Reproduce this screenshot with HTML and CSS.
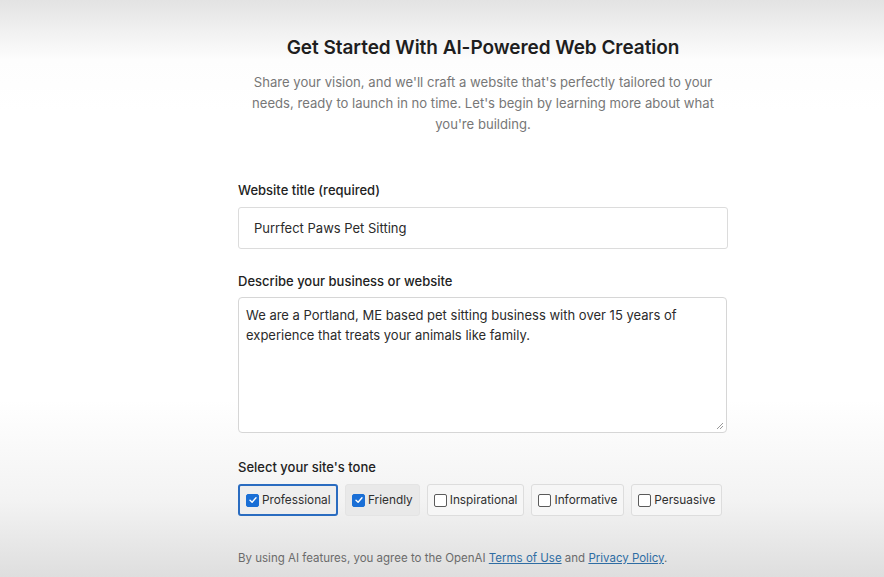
FILE: index.html
```html
<!DOCTYPE html>
<html>
<head>
<meta charset="utf-8">
<link rel="stylesheet" href="styles.css">
</head>
<body>
<main class="page">
  <section class="column">
    <header class="intro">
      <h1 class="title">Get Started With AI-Powered Web Creation</h1>
      <p class="subtitle">Share your vision, and we'll craft a website that's perfectly tailored to your needs, ready to launch in no time. Let's begin by learning more about what you're building.</p>
    </header>

    <div class="field field-title">
      <label class="label">Website title (required)</label>
      <div class="input">Purrfect Paws Pet Sitting</div>
    </div>

    <div class="field field-desc">
      <label class="label">Describe your business or website</label>
      <div class="textarea">We are a Portland, ME based pet sitting business with over 15 years of experience that treats your animals like family.
        <svg class="grip" width="8" height="8" viewBox="0 0 8 8"><path d="M7 1 L1 7 M7 4 L4 7" stroke="#999" stroke-width="1" fill="none"/></svg>
      </div>
    </div>

    <div class="field field-tone">
      <label class="label">Select your site's tone</label>
      <div class="tones">
        <div class="tone tone-focus"><span class="box checked"><svg width="10" height="10" viewBox="0 0 10 10"><path d="M2 5.2 L4.1 7.2 L8 2.8" stroke="#fff" stroke-width="1.4" fill="none" stroke-linecap="round" stroke-linejoin="round"/></svg></span>Professional</div>
        <div class="tone tone-active"><span class="box checked"><svg width="10" height="10" viewBox="0 0 10 10"><path d="M2 5.2 L4.1 7.2 L8 2.8" stroke="#fff" stroke-width="1.4" fill="none" stroke-linecap="round" stroke-linejoin="round"/></svg></span>Friendly</div>
        <div class="tone"><span class="box"></span>Inspirational</div>
        <div class="tone"><span class="box"></span>Informative</div>
        <div class="tone"><span class="box"></span>Persuasive</div>
      </div>
    </div>

    <p class="legal">By using AI features, you agree to the OpenAI <a href="#">Terms of Use</a> and <a href="#">Privacy Policy</a>.</p>
  </section>
</main>
</body>
</html>
```

FILE: styles.css
```css
* { box-sizing: border-box; }
html, body { margin: 0; padding: 0; height: 100%; }
body {
  font-family: Inter, "Noto Sans", sans-serif;
  color: #1e1e1e;
  background: linear-gradient(to bottom, #e3e3e3 0px, #fdfdfd 60px, #ffffff 110px, #ffffff 400px, #f3f3f3 500px, #dedede 577px);
  overflow: hidden;
}
.page {
  display: flex;
  padding-left: 238px;
}
.column {
  width: 490px;
  display: flex;
  flex-direction: column;
}
.intro {
  text-align: center;
  padding-top: 36px;
}
.title {
  margin: 0;
  font-size: 19px;
  font-weight: 600;
  line-height: 24px;
  letter-spacing: -0.05px;
  color: #1e1e1e;
}
.subtitle {
  margin: 12px auto 0;
  width: 480px;
  font-size: 13.1px;
  line-height: 21px;
  color: #777777;
}
.field { display: flex; flex-direction: column; }
.field-title { margin-top: 45px; }
.field-desc { margin-top: 22px; }
.field-tone { margin-top: 24px; }
.label {
  font-size: 13px;
  line-height: 20px;
  font-weight: 500;
  color: #222222;
  margin-bottom: 7px;
}
.input {
  height: 42px;
  border: 1px solid #dcdcdc;
  border-radius: 3px;
  background: #fff;
  padding: 0 15px;
  display: flex;
  align-items: center;
  font-size: 13px;
  color: #2b2b2b;
}
.textarea {
  position: relative;
  height: 136px;
  border: 1px solid #d6d6d6;
  border-radius: 4px;
  background: #fff;
  padding: 7px 30px 0 7px;
  font-size: 13px;
  line-height: 20px;
  color: #2b2b2b;
  margin-right: 1px;
}
.field-desc .label { margin-bottom: 6px; }
.grip { position: absolute; right: 2px; bottom: 2px; }
.tones {
  display: flex;
  gap: 7px;
}
.tone {
  height: 32px;
  display: flex;
  align-items: center;
  gap: 3px;
  padding: 0 6px;
  border: 1px solid #dddddd;
  border-radius: 3px;
  background: #f6f6f6;
  font-size: 11.8px;
  color: #2f2f2f;
}
.tone-focus {
  border: 2px solid #2a6cc0;
  padding: 0 6px;
  background: #eeeeee;
  width: 100px;
}
.tone-active {
  background: #e9e9e9;
  border-color: #e4e4e4;
}
.box {
  width: 13px;
  height: 13px;
  border: 1.3px solid #5a5a5a;
  border-radius: 2px;
  background: #fff;
  display: flex;
  align-items: center;
  justify-content: center;
  flex: none;
}
.box.checked {
  background: #1a6fd6;
  border-color: #1a6fd6;
}
.legal {
  margin: 34px 0 0;
  font-size: 11.5px;
  line-height: 16px;
  color: #6b6b6b;
}
.legal a {
  color: #2f6da3;
  text-decoration: underline;
}
```
